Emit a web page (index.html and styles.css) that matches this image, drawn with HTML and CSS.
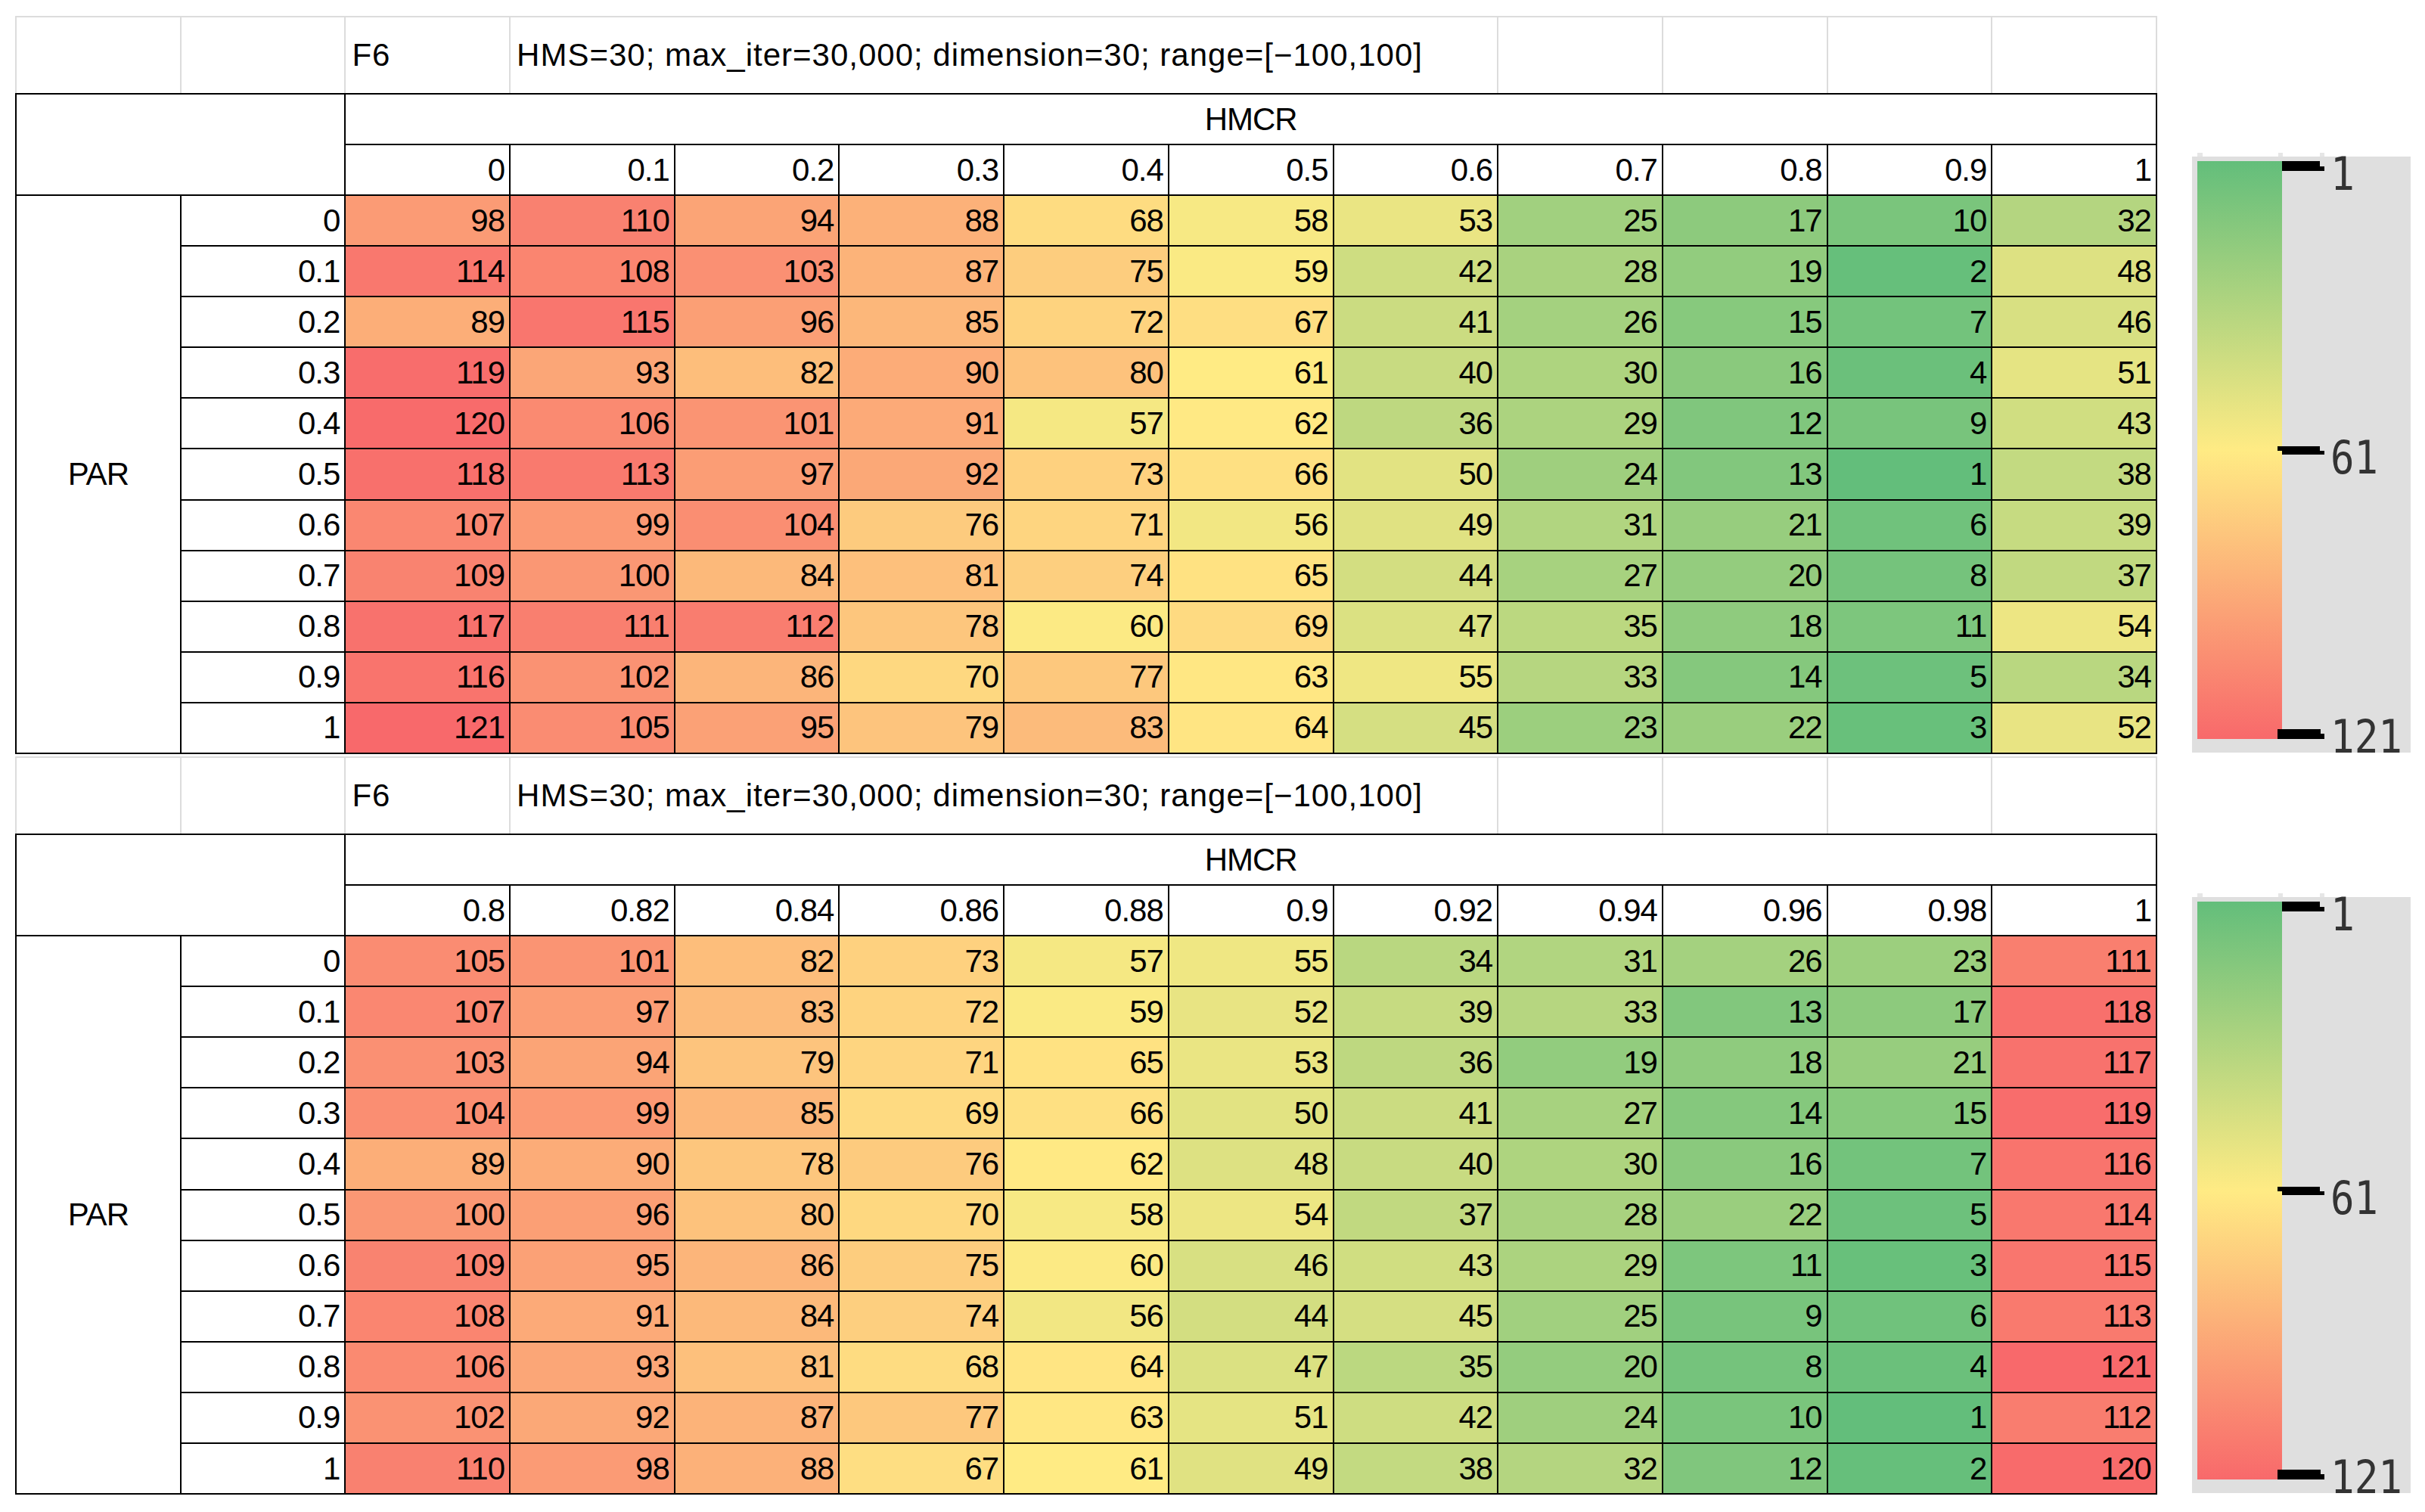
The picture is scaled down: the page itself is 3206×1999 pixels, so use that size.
FILE: index.html
```html
<!DOCTYPE html>
<html lang="en">
<head>
<meta charset="utf-8">
<title>F6 HMCR / PAR</title>
<link rel="stylesheet" href="styles.css">
</head>
<body>
<div class="page">
  <div class="block">
    <div class="sheet">
      <div class="title-row">
        <div class="tc"></div><div class="tc"></div><div class="tc">F6</div>
        <div class="tc tc-wide">HMS=30; max_iter=30,000; dimension=30; range=[−100,100]</div>
        <div class="tc"></div><div class="tc"></div><div class="tc"></div><div class="tc"></div>
      </div>
      <div class="table">
        <div class="corner"></div>
        <div class="hmcr">HMCR</div>
        <div class="par">PAR</div>
        <div>0</div><div>0.1</div><div>0.2</div><div>0.3</div><div>0.4</div><div>0.5</div><div>0.6</div><div>0.7</div><div>0.8</div><div>0.9</div><div>1</div>
        <div>0</div><div class="v">98</div><div class="v">110</div><div class="v">94</div><div class="v">88</div><div class="v">68</div><div class="v">58</div><div class="v">53</div><div class="v">25</div><div class="v">17</div><div class="v">10</div><div class="v">32</div>
        <div>0.1</div><div class="v">114</div><div class="v">108</div><div class="v">103</div><div class="v">87</div><div class="v">75</div><div class="v">59</div><div class="v">42</div><div class="v">28</div><div class="v">19</div><div class="v">2</div><div class="v">48</div>
        <div>0.2</div><div class="v">89</div><div class="v">115</div><div class="v">96</div><div class="v">85</div><div class="v">72</div><div class="v">67</div><div class="v">41</div><div class="v">26</div><div class="v">15</div><div class="v">7</div><div class="v">46</div>
        <div>0.3</div><div class="v">119</div><div class="v">93</div><div class="v">82</div><div class="v">90</div><div class="v">80</div><div class="v">61</div><div class="v">40</div><div class="v">30</div><div class="v">16</div><div class="v">4</div><div class="v">51</div>
        <div>0.4</div><div class="v">120</div><div class="v">106</div><div class="v">101</div><div class="v">91</div><div class="v">57</div><div class="v">62</div><div class="v">36</div><div class="v">29</div><div class="v">12</div><div class="v">9</div><div class="v">43</div>
        <div>0.5</div><div class="v">118</div><div class="v">113</div><div class="v">97</div><div class="v">92</div><div class="v">73</div><div class="v">66</div><div class="v">50</div><div class="v">24</div><div class="v">13</div><div class="v">1</div><div class="v">38</div>
        <div>0.6</div><div class="v">107</div><div class="v">99</div><div class="v">104</div><div class="v">76</div><div class="v">71</div><div class="v">56</div><div class="v">49</div><div class="v">31</div><div class="v">21</div><div class="v">6</div><div class="v">39</div>
        <div>0.7</div><div class="v">109</div><div class="v">100</div><div class="v">84</div><div class="v">81</div><div class="v">74</div><div class="v">65</div><div class="v">44</div><div class="v">27</div><div class="v">20</div><div class="v">8</div><div class="v">37</div>
        <div>0.8</div><div class="v">117</div><div class="v">111</div><div class="v">112</div><div class="v">78</div><div class="v">60</div><div class="v">69</div><div class="v">47</div><div class="v">35</div><div class="v">18</div><div class="v">11</div><div class="v">54</div>
        <div>0.9</div><div class="v">116</div><div class="v">102</div><div class="v">86</div><div class="v">70</div><div class="v">77</div><div class="v">63</div><div class="v">55</div><div class="v">33</div><div class="v">14</div><div class="v">5</div><div class="v">34</div>
        <div>1</div><div class="v">121</div><div class="v">105</div><div class="v">95</div><div class="v">79</div><div class="v">83</div><div class="v">64</div><div class="v">45</div><div class="v">23</div><div class="v">22</div><div class="v">3</div><div class="v">52</div>
      </div>
    </div>
    <svg class="legend" width="300" height="850" viewBox="0 0 300 850">
      <defs>
        <linearGradient id="scale1" x1="0" y1="0" x2="0" y2="1">
          <stop offset="0" stop-color="#63BE7B"/>
          <stop offset="0.5" stop-color="#FFEB84"/>
          <stop offset="1" stop-color="#F8696B"/>
        </linearGradient>
      </defs>
      <g transform="translate(0,20)">
        <rect class="stub" x="10" y="2" width="7" height="5"/>
        <rect class="stub" x="117" y="2" width="6" height="5"/>
        <rect class="stub" x="172" y="2" width="6" height="5"/>
        <rect class="box" x="3" y="7" width="289" height="788"/>
        <rect x="10" y="13" width="112" height="764" fill="url(#scale1)"/>
        <path class="tick" d="M122 13H172V20H178V26H122Z"/>
        <path class="tick" d="M116 390H172V396H178V401H122V396H116Z"/>
        <path class="tick" d="M116 764H173V770H178V777H116Z"/>
        <text x="186" y="51" textLength="32" lengthAdjust="spacingAndGlyphs">1</text>
        <text x="186" y="426" textLength="63" lengthAdjust="spacingAndGlyphs">61</text>
        <text x="186" y="795" textLength="95" lengthAdjust="spacingAndGlyphs">121</text>
      </g>
    </svg>
  </div>

  <div class="block">
    <div class="sheet">
      <div class="title-row">
        <div class="tc"></div><div class="tc"></div><div class="tc">F6</div>
        <div class="tc tc-wide">HMS=30; max_iter=30,000; dimension=30; range=[−100,100]</div>
        <div class="tc"></div><div class="tc"></div><div class="tc"></div><div class="tc"></div>
      </div>
      <div class="table">
        <div class="corner"></div>
        <div class="hmcr">HMCR</div>
        <div class="par">PAR</div>
        <div>0.8</div><div>0.82</div><div>0.84</div><div>0.86</div><div>0.88</div><div>0.9</div><div>0.92</div><div>0.94</div><div>0.96</div><div>0.98</div><div>1</div>
        <div>0</div><div class="v">105</div><div class="v">101</div><div class="v">82</div><div class="v">73</div><div class="v">57</div><div class="v">55</div><div class="v">34</div><div class="v">31</div><div class="v">26</div><div class="v">23</div><div class="v">111</div>
        <div>0.1</div><div class="v">107</div><div class="v">97</div><div class="v">83</div><div class="v">72</div><div class="v">59</div><div class="v">52</div><div class="v">39</div><div class="v">33</div><div class="v">13</div><div class="v">17</div><div class="v">118</div>
        <div>0.2</div><div class="v">103</div><div class="v">94</div><div class="v">79</div><div class="v">71</div><div class="v">65</div><div class="v">53</div><div class="v">36</div><div class="v">19</div><div class="v">18</div><div class="v">21</div><div class="v">117</div>
        <div>0.3</div><div class="v">104</div><div class="v">99</div><div class="v">85</div><div class="v">69</div><div class="v">66</div><div class="v">50</div><div class="v">41</div><div class="v">27</div><div class="v">14</div><div class="v">15</div><div class="v">119</div>
        <div>0.4</div><div class="v">89</div><div class="v">90</div><div class="v">78</div><div class="v">76</div><div class="v">62</div><div class="v">48</div><div class="v">40</div><div class="v">30</div><div class="v">16</div><div class="v">7</div><div class="v">116</div>
        <div>0.5</div><div class="v">100</div><div class="v">96</div><div class="v">80</div><div class="v">70</div><div class="v">58</div><div class="v">54</div><div class="v">37</div><div class="v">28</div><div class="v">22</div><div class="v">5</div><div class="v">114</div>
        <div>0.6</div><div class="v">109</div><div class="v">95</div><div class="v">86</div><div class="v">75</div><div class="v">60</div><div class="v">46</div><div class="v">43</div><div class="v">29</div><div class="v">11</div><div class="v">3</div><div class="v">115</div>
        <div>0.7</div><div class="v">108</div><div class="v">91</div><div class="v">84</div><div class="v">74</div><div class="v">56</div><div class="v">44</div><div class="v">45</div><div class="v">25</div><div class="v">9</div><div class="v">6</div><div class="v">113</div>
        <div>0.8</div><div class="v">106</div><div class="v">93</div><div class="v">81</div><div class="v">68</div><div class="v">64</div><div class="v">47</div><div class="v">35</div><div class="v">20</div><div class="v">8</div><div class="v">4</div><div class="v">121</div>
        <div>0.9</div><div class="v">102</div><div class="v">92</div><div class="v">87</div><div class="v">77</div><div class="v">63</div><div class="v">51</div><div class="v">42</div><div class="v">24</div><div class="v">10</div><div class="v">1</div><div class="v">112</div>
        <div>1</div><div class="v">110</div><div class="v">98</div><div class="v">88</div><div class="v">67</div><div class="v">61</div><div class="v">49</div><div class="v">38</div><div class="v">32</div><div class="v">12</div><div class="v">2</div><div class="v">120</div>
      </div>
    </div>
    <svg class="legend" width="300" height="850" viewBox="0 0 300 850">
      <defs>
        <linearGradient id="scale2" x1="0" y1="0" x2="0" y2="1">
          <stop offset="0" stop-color="#63BE7B"/>
          <stop offset="0.5" stop-color="#FFEB84"/>
          <stop offset="1" stop-color="#F8696B"/>
        </linearGradient>
      </defs>
      <g transform="translate(0,20)">
        <rect class="stub" x="10" y="2" width="7" height="5"/>
        <rect class="stub" x="117" y="2" width="6" height="5"/>
        <rect class="stub" x="172" y="2" width="6" height="5"/>
        <rect class="box" x="3" y="7" width="289" height="788"/>
        <rect x="10" y="13" width="112" height="764" fill="url(#scale2)"/>
        <path class="tick" d="M122 13H172V20H178V26H122Z"/>
        <path class="tick" d="M116 390H172V396H178V401H122V396H116Z"/>
        <path class="tick" d="M116 764H173V770H178V777H116Z"/>
        <text x="186" y="51" textLength="32" lengthAdjust="spacingAndGlyphs">1</text>
        <text x="186" y="426" textLength="63" lengthAdjust="spacingAndGlyphs">61</text>
        <text x="186" y="795" textLength="95" lengthAdjust="spacingAndGlyphs">121</text>
      </g>
    </svg>
  </div>
</div>
<script src="script.js"></script>
</body>
</html>
```

FILE: styles.css
```css
* { box-sizing: border-box; }
html, body { margin: 0; background: #fff; }
body {
  font-family: "Liberation Sans", Arial, sans-serif;
  font-size: 42px;
  color: #000;
}
.page { padding: 21px 0 0 20px; }
.block { display: flex; align-items: flex-start; }
.block + .block { margin-top: 3px; }
.sheet { width: 2832px; flex: none; }

.title-row {
  display: grid;
  grid-template-columns: repeat(13, 1fr);
  column-gap: 2px;
  height: 102px;
  padding: 2px 2px 0 2px;
  background: #dcdcdc;
}
.tc {
  background: #fff;
  display: flex;
  align-items: center;
  padding-left: 8px;
  letter-spacing: 1px;
  white-space: nowrap;
}
.tc-wide { grid-column: span 6; }

.table {
  display: grid;
  grid-template-columns: repeat(13, 1fr);
  grid-template-rows: 65px 65px repeat(11, 65.1px);
  gap: 2px;
  padding: 2px;
  background: #000;
  letter-spacing: -1px;
}
.table > div {
  background: #fff;
  display: flex;
  align-items: center;
  justify-content: flex-end;
  padding-right: 6px;
  white-space: nowrap;
}
.table > .corner { grid-column: 1 / 3; grid-row: 1 / 3; }
.table > .hmcr { grid-column: 3 / 14; grid-row: 1; justify-content: center; padding: 0; }
.table > .par { grid-column: 1; grid-row: 3 / 14; justify-content: center; padding: 0; }

.legend {
  display: block;
  flex: none;
  margin-left: 43px;
  margin-top: 159px;
  margin-bottom: -60px;
}
.legend .stub { fill: #e6e6e6; }
.legend .box { fill: #dfdfdf; }
.legend .tick { fill: #000; }
.legend text {
  font-family: "DejaVu Sans Mono", "Liberation Mono", monospace;
  font-size: 60px;
  fill: #333;
}
```

FILE: script.js
```js
(function () {
  var lo = [99, 190, 123], mid = [255, 235, 132], hi = [248, 105, 107];
  var cells = document.querySelectorAll('.table .v');
  for (var k = 0; k < cells.length; k++) {
    var v = parseFloat(cells[k].textContent);
    var a, b, t;
    if (v <= 61) { a = lo; b = mid; t = (v - 1) / 60; }
    else { a = mid; b = hi; t = (v - 61) / 60; }
    var rgb = [];
    for (var i = 0; i < 3; i++) rgb.push(Math.round(a[i] + (b[i] - a[i]) * t));
    cells[k].style.backgroundColor = 'rgb(' + rgb.join(',') + ')';
  }
})();
```
